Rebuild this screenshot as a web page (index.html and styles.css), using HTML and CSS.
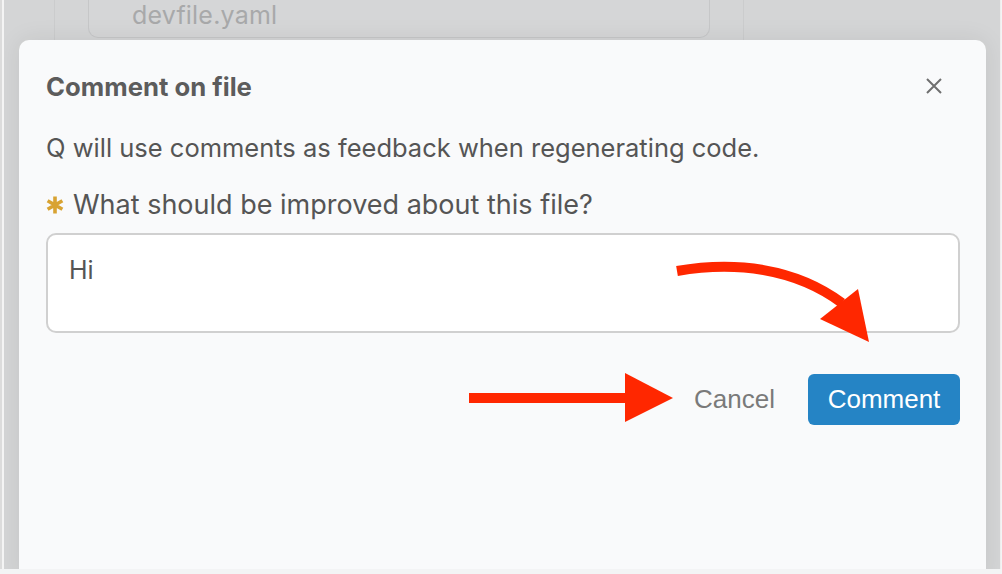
FILE: index.html
```html
<!DOCTYPE html>
<html lang="en">
<head>
<meta charset="utf-8">
<title>Comment on file</title>
<link rel="stylesheet" href="styles.css">
</head>
<body>
<div class="screen">
  <div class="backdrop">
    <div class="side-left"></div>
    <div class="main-col">
      <div class="file-card"><span class="file-name">devfile.yaml</span></div>
    </div>
    <div class="side-right"></div>
  </div>

  <div class="modal" role="dialog" aria-labelledby="modal-title">
    <div class="modal-header">
      <h2 id="modal-title" class="modal-title">Comment on file</h2>
      <button class="close-btn" aria-label="Close">
        <svg width="18" height="18" viewBox="0 0 18 18"><path d="M2 2 L16 16 M16 2 L2 16" stroke="#6f6f6f" stroke-width="2" fill="none"/></svg>
      </button>
    </div>
    <p class="modal-desc">Q will use comments as feedback when regenerating code.</p>
    <label class="field-label">
      <svg class="req" width="18" height="18" viewBox="0 0 18 18" aria-hidden="true"><path d="M9 0.5 V17.5 M1.6 4.75 L16.4 13.25 M1.6 13.25 L16.4 4.75" stroke="#d8a332" stroke-width="3.6" fill="none"/></svg>
      What should be improved about this file?
    </label>
    <div class="textarea">Hi</div>
    <div class="actions">
      <button class="btn-cancel">Cancel</button>
      <button class="btn-primary">Comment</button>
    </div>
  </div>

  <svg class="annotations" width="1002" height="574" viewBox="0 0 1002 574">
    <rect x="469" y="393" width="158" height="10" fill="#ff2700"/>
    <polygon points="625,373 673,398 625,422" fill="#ff2700"/>
    <path d="M677 271 C 735 261, 795 268, 842 303" stroke="#ff2700" stroke-width="10" fill="none"/>
    <polygon points="820,319 858,289 869,342" fill="#ff2700"/>
  </svg>
</div>
</body>
</html>
```
FILE: styles.css
```css
html, body {
  margin: 0;
  padding: 0;
}
body {
  width: 1002px;
  height: 574px;
  overflow: hidden;
  background: #f3f4f5;
  font-family: Inter, "Open Sans", "Liberation Sans", sans-serif;
}
.screen {
  position: relative;
  width: 996px;
  height: 569px;
  margin-left: 4px;
  background: #d4d5d6;
  border-right: 1px solid #eeeeee;
  overflow: hidden;
  box-shadow: -2px 0 0 #f4f4f4, -4px 0 0 #dcdcdc;
}
.backdrop {
  display: flex;
  height: 100%;
}
.side-left {
  width: 50px;
  border-right: 1px solid #cbcccd;
}
.main-col {
  width: 689px;
  box-sizing: border-box;
  padding-left: 33px;
  border-right: 1px solid #cbcccd;
}
.file-card {
  width: 622px;
  height: 38px;
  border: 1px solid #c6c7c8;
  border-top: none;
  border-radius: 0 0 10px 10px;
  background: #d5d6d7;
  box-sizing: border-box;
  padding: 0 0 0 43px;
  line-height: 30px;
}
.file-name {
  font-size: 25px;
  letter-spacing: 0.2px;
  color: #a8a9aa;
}
.side-right {
  flex: 1;
}
.modal {
  position: absolute;
  left: 15px;
  top: 40px;
  width: 967px;
  height: 540px;
  background: #f9fafb;
  border-radius: 10px 10px 0 0;
  box-shadow: 0 0 24px rgba(0,0,0,0.08);
  padding: 27px 26px 0 27px;
  box-sizing: border-box;
  color: #555555;
}
.modal-header {
  display: flex;
  align-items: center;
  justify-content: space-between;
  height: 38px;
}
.modal-title {
  margin: 0;
  font-size: 25.7px;
  font-weight: 700;
  color: #5c5c5c;
}
.close-btn {
  background: none;
  border: none;
  padding: 0;
  margin-right: 17px;
  width: 18px;
  height: 18px;
  display: flex;
}
.modal-desc {
  margin: 28px 0 0 0;
  font-size: 25.5px;
  line-height: 30px;
  color: #555555;
}
.field-label {
  display: flex;
  align-items: center;
  margin-top: 27px;
  font-size: 27px;
  line-height: 30px;
  color: #555555;
}
.req {
  margin-right: 9px;
  flex: none;
}
.textarea {
  margin-top: 13px;
  height: 100px;
  box-sizing: border-box;
  border: 2px solid #d0d0d0;
  border-radius: 10px;
  background: #ffffff;
  padding: 20px 21px;
  font-size: 25px;
  line-height: 30px;
  color: #555555;
}
.actions {
  display: flex;
  justify-content: flex-end;
  align-items: center;
  gap: 33px;
  margin-top: 41px;
}
.btn-cancel {
  background: none;
  border: none;
  padding: 0;
  font-family: "Liberation Sans", Arial, sans-serif;
  font-size: 26px;
  color: #7a7a7a;
}
.btn-primary {
  background: #2584c5;
  border: none;
  border-radius: 6px;
  width: 152px;
  height: 51px;
  font-family: "Liberation Sans", Arial, sans-serif;
  font-size: 26px;
  color: #ffffff;
}
.annotations {
  position: absolute;
  left: -4px;
  top: 0;
  pointer-events: none;
}
```
